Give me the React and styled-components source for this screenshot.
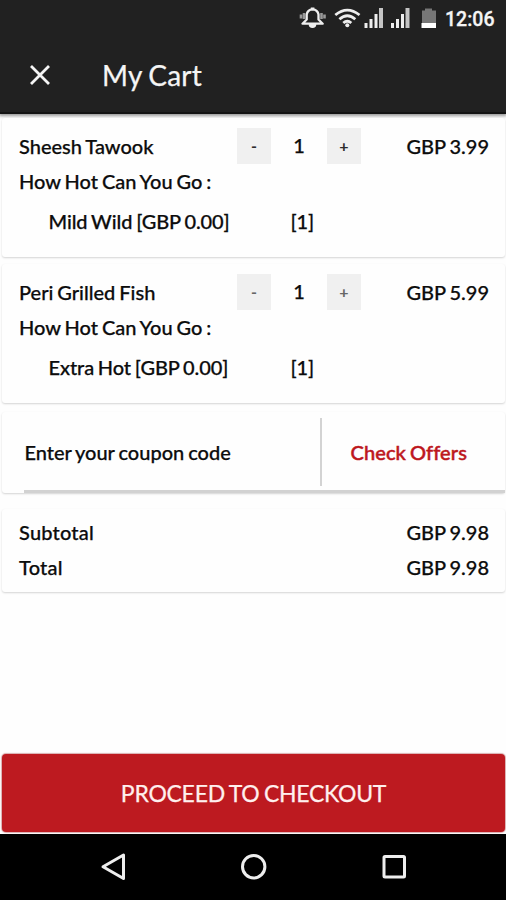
import React from "react";
import styled, { createGlobalStyle } from "styled-components";

const GlobalStyle = createGlobalStyle`
  * { box-sizing: border-box; }
  body { margin: 0; background: #fff; }
  button { border: 0; padding: 0; margin: 0; font: inherit; color: inherit; background: none; letter-spacing: inherit; word-spacing: inherit; }
`;

const Screen = styled.div`
  width: 506px;
  height: 900px;
  display: flex;
  flex-direction: column;
  overflow: hidden;
  background: #fefefe;
  color: #0c0c0c;
  font-family: Lato, "Open Sans", sans-serif;
  font-size: 20px;
  font-weight: 500;
  line-height: 24px;
  word-spacing: -1.1px;
  white-space: nowrap;
`;

const Header = styled.header`
  height: 114px;
  flex: none;
  background: #212121;
  border-bottom: 2px solid #141414;
  box-shadow: 0 1px 3px 1px rgba(0, 0, 0, 0.4);
  color: #f5f5f5;
`;

const StatusBar = styled.div`
  height: 38px;
  display: flex;
  justify-content: flex-end;
  padding-right: 11px;
`;

const StatusIcons = styled.svg`
  width: 146px;
  height: 38px;
  margin-right: 9px;
`;

const Clock = styled.span`
  width: 50px;
  font: 500 19.5px/39px Roboto, sans-serif;
  -webkit-text-stroke: 0.3px currentColor;
`;

const AppBar = styled.div`
  height: 74px;
  display: flex;
  align-items: center;
  padding-left: 28px;
`;

const CloseButton = styled.button`
  width: 24px;
  height: 24px;
  margin-right: 50px;
  svg { display: block; }
`;

const Title = styled.h1`
  margin: 0;
  font-size: 28px;
  font-weight: 400;
  line-height: 34px;
  letter-spacing: 0.25px;
  -webkit-text-stroke: 0.25px currentColor;
`;

const Cart = styled.main`
  flex: 1;
  display: flex;
  flex-direction: column;
  padding: 4px 1px 0 2px;
  -webkit-text-stroke: 0.25px currentColor;
`;

const Card = styled.section`
  flex: none;
  height: ${(p) => p.$height}px;
  margin-bottom: ${(p) => p.$gap}px;
  background: #fefefe;
  border-radius: 3px;
  box-shadow: 0 1px 2px rgba(0, 0, 0, 0.17);
`;

const ItemCard = styled(Card)`
  padding: 10px 16px 0 17px;
`;

const ItemRow = styled.div`
  display: grid;
  grid-template-columns: 218px 34px 56px 34px 1fr;
  align-items: center;
  height: 36px;
`;

const StepButton = styled.button`
  height: 36px;
  background: #f0f0f0;
  color: ${(p) => (p.$muted ? "#666" : "#2c2c2c")};
  font-size: 16px;
  font-weight: 700;
  line-height: 36px;
  -webkit-text-stroke: 0;
`;

const Quantity = styled.span`
  text-align: center;
  line-height: 24px;
  padding-bottom: 2px;
`;

const Price = styled.span`
  text-align: right;
`;

const OptionGroup = styled.div`
  margin-top: 5px;
  line-height: 24px;
`;

const OptionRow = styled.div`
  display: grid;
  grid-template-columns: 242px 1fr;
  margin-top: 16px;
  padding-left: 29.5px;
  letter-spacing: -0.1px;
`;

const CouponCard = styled(Card)`
  display: grid;
  grid-template-columns: 320px 1fr;
  padding-top: 6px;
`;

const CouponInput = styled.div`
  height: 68px;
  padding-left: 22.5px;
  border-right: 2px solid #d3d3d3;
  line-height: 68px;
`;

const OffersLink = styled.button`
  height: 68px;
  padding-left: 28.5px;
  text-align: left;
  color: #bd171d;
  letter-spacing: 0.1px;
  -webkit-text-stroke: 0.5px currentColor;
`;

const Underline = styled.div`
  grid-column: 1 / -1;
  align-self: end;
  height: 3px;
  margin-left: 22px;
  background: #d2d2d2;
`;

const TotalsCard = styled(Card)`
  padding: 11px 16px 0 17px;
`;

const TotalRow = styled.div`
  display: flex;
  justify-content: space-between;
  height: 35px;
`;

const TotalLabel = styled.span`
  letter-spacing: 0.2px;
`;

const CheckoutButton = styled.button`
  flex: none;
  width: 503px;
  height: 78px;
  margin: 0 1px 2px 2px;
  border-radius: 4px;
  background: #bd1a20;
  box-shadow: 0 0 1px 1px rgba(150, 20, 25, 0.35);
  color: #fff0ee;
  font-size: 23px;
  font-weight: 400;
  letter-spacing: -0.27px;
  text-align: center;
  -webkit-text-stroke: 0.25px currentColor;
`;

const NavBar = styled.nav`
  flex: none;
  height: 66px;
  background: #000;
  svg { display: block; }
`;

function StatusGlyphs() {
  const signal = (x) => (
    <g fill="#eee">
      <rect x={x} y="23" width="3" height="5" />
      <rect x={x + 5} y="19" width="3" height="9" />
      <rect x={x + 10} y="14" width="3" height="14" />
      <rect x={x + 14.5} y="8" width="4" height="20" fill="#c4c4c4" />
    </g>
  );
  return (
    <StatusIcons viewBox="290 0 146 38">
      <path d="M301 14.5v4M324.5 14.5v4M304 13v6M321.5 13v6" stroke="#999" strokeWidth="2.6" />
      <path d="M302.5 23.7L306.7 19.5V14.5Q307.5 9.7 312.5 9.4Q317.7 9.7 318.5 14.5V19.5L322.7 23.7Z" fill="#202020" stroke="#eee" strokeWidth="2.3" strokeLinejoin="round" />
      <path d="M310.8 8.2h3.6M309.5 24.3h6a3 3 0 0 1-6 0" fill="#eee" stroke="#eee" strokeWidth="1.6" />
      <g fill="none" stroke="#eee" strokeWidth="2.8">
        <path d="M335.3 15Q347.3 5.2 359.5 15" />
        <path d="M339.4 19.2Q347.3 12.4 355.3 19.2" />
        <path d="M343.3 23Q347.3 19.5 351.3 23" />
      </g>
      <circle cx="347.3" cy="25.3" r="2" fill="#eee" />
      {signal(364.5)}
      {signal(391)}
      <path d="M422 10.5h3V8.5h7v2h4V24H422Z" fill="#777" />
      <rect x="421.5" y="23" width="15" height="5" fill="#fff" />
    </StatusIcons>
  );
}

const items = [
  { name: "Sheesh Tawook", price: "GBP 3.99", option: "Mild Wild [GBP 0.00]" },
  { name: "Peri Grilled Fish", price: "GBP 5.99", option: "Extra Hot [GBP 0.00]", muted: true },
];

const totals = [
  ["Subtotal", "GBP 9.98"],
  ["Total", "GBP 9.98"],
];

export default function App() {
  return (
    <Screen>
      <GlobalStyle />
      <Header>
        <StatusBar>
          <StatusGlyphs />
          <Clock>12:06</Clock>
        </StatusBar>
        <AppBar>
          <CloseButton aria-label="Close">
            <svg width="24" height="24" viewBox="0 0 24 24">
              <path d="M3 3L21 21M21 3L3 21" stroke="#f5f5f5" strokeWidth="2.8" />
            </svg>
          </CloseButton>
          <Title>My Cart</Title>
        </AppBar>
      </Header>
      <Cart>
        {items.map((item, i) => (
          <ItemCard key={item.name} $height={139} $gap={i ? 9 : 7}>
            <ItemRow>
              <span>{item.name}</span>
              <StepButton $muted={item.muted}>-</StepButton>
              <Quantity>1</Quantity>
              <StepButton $muted={item.muted}>+</StepButton>
              <Price>{item.price}</Price>
            </ItemRow>
            <OptionGroup>How Hot Can You Go :</OptionGroup>
            <OptionRow>
              <span>{item.option}</span>
              <span>[1]</span>
            </OptionRow>
          </ItemCard>
        ))}
        <CouponCard $height={81} $gap={16}>
          <CouponInput>Enter your coupon code</CouponInput>
          <OffersLink>Check Offers</OffersLink>
          <Underline />
        </CouponCard>
        <TotalsCard $height={83} $gap={0}>
          {totals.map(([label, amount]) => (
            <TotalRow key={label}>
              <TotalLabel>{label}</TotalLabel>
              <Price>{amount}</Price>
            </TotalRow>
          ))}
        </TotalsCard>
      </Cart>
      <CheckoutButton>PROCEED TO CHECKOUT</CheckoutButton>
      <NavBar>
        <svg width="506" height="66" viewBox="0 834 506 66" fill="none" stroke="#eee" strokeWidth="3">
          <path d="M123.5 855V878.5L103 866.7Z" strokeLinejoin="round" />
          <circle cx="253.7" cy="866.7" r="11.2" />
          <rect x="384" y="856.5" width="20.5" height="20.5" rx="1" />
        </svg>
      </NavBar>
    </Screen>
  );
}
